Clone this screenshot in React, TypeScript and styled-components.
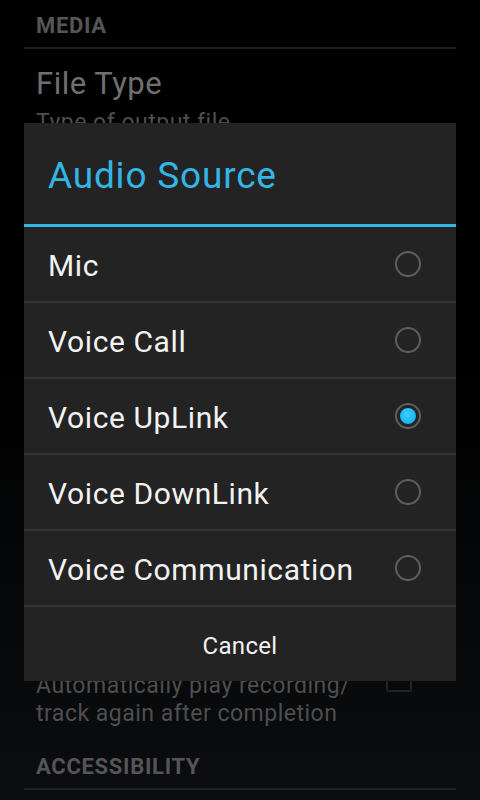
import styled, { createGlobalStyle } from 'styled-components';

const GlobalStyle = createGlobalStyle`
  html, body {
    margin: 0;
    padding: 0;
    background: #000;
  }
  #root {
    width: 480px;
    height: 800px;
  }
`;

const OPTIONS = ['Mic', 'Voice Call', 'Voice UpLink', 'Voice DownLink', 'Voice Communication'];
const SELECTED = 'Voice UpLink';

export default function App() {
  return (
    <>
      <GlobalStyle />
      <Screen>
        <Prefs>
          <TopGroup>
            <SectionHeader>MEDIA</SectionHeader>
            <PrefItem>
              <PrefTitle>File Type</PrefTitle>
              <PrefSummary>Type of output file</PrefSummary>
            </PrefItem>
          </TopGroup>
          <BottomGroup>
            <CheckItem>
              <PrefSummary>
                Automatically play recording/
                <br />
                track again after completion
              </PrefSummary>
              <CheckBox />
            </CheckItem>
            <SectionHeader>ACCESSIBILITY</SectionHeader>
          </BottomGroup>
        </Prefs>

        <Dialog>
          <DialogTitle>Audio Source</DialogTitle>
          <TitleRule />
          <OptionList>
            {OPTIONS.map((opt) => (
              <OptionRow key={opt}>
                <OptionLabel>{opt}</OptionLabel>
                <Radio checked={opt === SELECTED} />
              </OptionRow>
            ))}
          </OptionList>
          <CancelButton type="button">Cancel</CancelButton>
        </Dialog>
      </Screen>
    </>
  );
}

const Screen = styled.div`
  position: relative;
  width: 480px;
  height: 800px;
  overflow: hidden;
  background: linear-gradient(to bottom, #000 0%, #000 45%, #0b0d10 100%);
  font-family: Roboto, 'Noto Sans', sans-serif;
`;

const Prefs = styled.div`
  height: 100%;
  display: flex;
  flex-direction: column;
  justify-content: space-between;
`;

const TopGroup = styled.div`
  display: flex;
  flex-direction: column;
`;

const BottomGroup = styled.div`
  display: flex;
  flex-direction: column;
  padding-bottom: 10px;
`;

const SectionHeader = styled.div`
  margin: 0 24px;
  padding: 12px 12px 7px;
  font-size: 22px;
  line-height: 28px;
  letter-spacing: 0.7px;
  font-weight: 700;
  color: #555;
  border-bottom: 2px solid #1d1f22;
`;

const PrefItem = styled.div`
  padding: 14px 36px 0;
  display: flex;
  flex-direction: column;
`;

const PrefTitle = styled.div`
  font-size: 31px;
  line-height: 42px;
  letter-spacing: 0.5px;
  color: #707070;
  margin-bottom: 4px;
`;

const PrefSummary = styled.div`
  font-size: 23px;
  line-height: 28px;
  letter-spacing: 0.5px;
  color: #4e4e4e;
`;

const CheckItem = styled.div`
  display: flex;
  align-items: flex-start;
  justify-content: space-between;
  padding: 0 68px 13px 36px;
`;

const CheckBox = styled.div`
  width: 22px;
  height: 22px;
  margin-top: -6px;
  border: 2px solid #202225;
  border-radius: 2px;
`;

const Dialog = styled.div`
  position: absolute;
  top: 123px;
  left: 24px;
  width: 432px;
  height: 558px;
  background: #232323;
  display: flex;
  flex-direction: column;
`;

const DialogTitle = styled.div`
  height: 101px;
  display: flex;
  align-items: center;
  padding: 0 24px;
  padding-top: 3px;
  font-size: 37px;
  letter-spacing: 0.8px;
  color: #33b5e5;
  box-sizing: border-box;
`;

const TitleRule = styled.div`
  height: 3px;
  background: #33b5e5;
`;

const OptionList = styled.div`
  display: flex;
  flex-direction: column;
`;

const OptionRow = styled.div`
  height: 74px;
  display: flex;
  align-items: center;
  justify-content: space-between;
  padding: 2px 35px 0 24px;
  box-sizing: border-box;
  border-bottom: 2px solid #343434;
  height: 76px;
`;

const OptionLabel = styled.span`
  font-size: 30px;
  letter-spacing: 0.6px;
  color: #f2f2f2;
`;

const Radio = styled.span<{ checked: boolean }>`
  width: 22px;
  height: 22px;
  margin-top: -2px;
  border-radius: 50%;
  border: 2px solid #5e5e5e;
  display: flex;
  align-items: center;
  justify-content: center;
  &::after {
    content: '';
    display: ${({ checked }) => (checked ? 'block' : 'none')};
    width: 16px;
    height: 16px;
    border-radius: 50%;
    background: radial-gradient(circle at 45% 40%, #3fd0ff 0%, #14b4f0 70%, #0a8fc8 100%);
  }
`;

const CancelButton = styled.button`
  flex: 1;
  border: none;
  background: transparent;
  color: #f2f2f2;
  font-family: Roboto, 'Noto Sans', sans-serif;
  font-size: 24px;
  letter-spacing: 0.3px;
  padding: 4px 0 0;
`;
